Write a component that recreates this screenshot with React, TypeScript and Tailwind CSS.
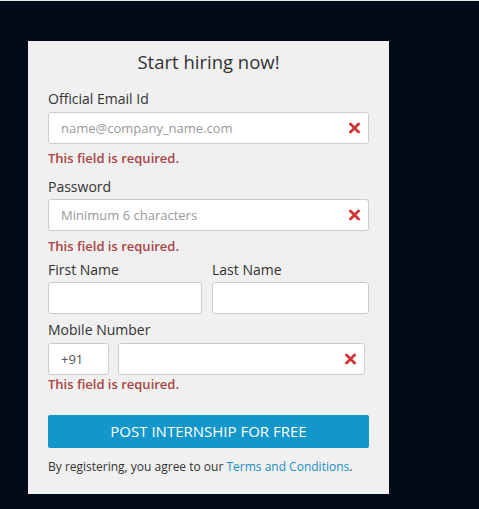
import React from 'react'

function ErrorX() {
  return (
    <svg width="11" height="11" viewBox="0 0 11 11" className="absolute right-[9px] top-1/2 -translate-y-1/2">
      <path d="M1.5 1.5 L9.5 9.5 M9.5 1.5 L1.5 9.5" stroke="#d03535" strokeWidth="2.8" strokeLinecap="square" />
    </svg>
  )
}

function Field({ placeholder, showX = true, className = '' }: { placeholder?: string; showX?: boolean; className?: string }) {
  return (
    <div className={`relative ${className}`}>
      <input
        type="text"
        placeholder={placeholder}
        className="block h-[32px] w-full rounded-[3px] border border-[#cccccc] bg-white pl-[12px] pr-[30px] text-[13px] text-[#555] placeholder:text-[#999]"
      />
      {showX && <ErrorX />}
    </div>
  )
}

function Required({ className = '' }: { className?: string }) {
  return <p className={`text-[13px] leading-[18px] font-semibold text-[#a94442] ${className}`}>This field is required.</p>
}

export default function App() {
  return (
    <div
      className="min-h-[509px] w-[479px] border-t border-[#e8e8e8] bg-[#020b17] pt-[40px] pl-[28px]"
      style={{ fontFamily: '"Open Sans", "Liberation Sans", sans-serif' }}
    >
      <div className="w-[361px] bg-[#f0f0f0] px-[20px] pt-[8px] pb-[18px] text-[#333]">
        <h2 className="text-center text-[18.5px] leading-[26px] text-[#333]">Start hiring now!</h2>

        <label className="mt-[14px] block text-[14px] leading-[20px]">Official Email Id</label>
        <Field placeholder="name@company_name.com" className="mt-[3px]" />
        <Required className="mt-[5px]" />

        <label className="mt-[10px] block text-[14px] leading-[20px]">Password</label>
        <Field placeholder="Minimum 6 characters" className="mt-[2px]" />
        <Required className="mt-[6px]" />

        <div className="mt-[5px] flex gap-[10px]">
          <div className="w-[154px]">
            <label className="block text-[14px] leading-[20px]">First Name</label>
            <Field showX={false} className="mt-[2px]" />
          </div>
          <div className="flex-1">
            <label className="block text-[14px] leading-[20px]">Last Name</label>
            <Field showX={false} className="mt-[2px]" />
          </div>
        </div>

        <label className="mt-[6px] block text-[14px] leading-[20px]">Mobile Number</label>
        <div className="mt-[3px] flex gap-[9px] pr-[4px]">
          <input
            type="text"
            defaultValue="+91"
            className="block h-[32px] w-[61px] rounded-[3px] border border-[#cccccc] bg-white pl-[12px] text-[13px] text-[#555]"
          />
          <Field className="flex-1" />
        </div>
        <Required />

        <button className="mt-[22px] block h-[33px] w-full rounded-[2px] bg-[#1396c9] text-[15px] text-white">
          POST INTERNSHIP FOR FREE
        </button>

        <p className="mt-[10px] text-[12px] leading-[18px] text-[#333]">
          By registering, you agree to our <a className="text-[#1a8fc6]">Terms and Conditions</a>.
        </p>
      </div>
    </div>
  )
}
